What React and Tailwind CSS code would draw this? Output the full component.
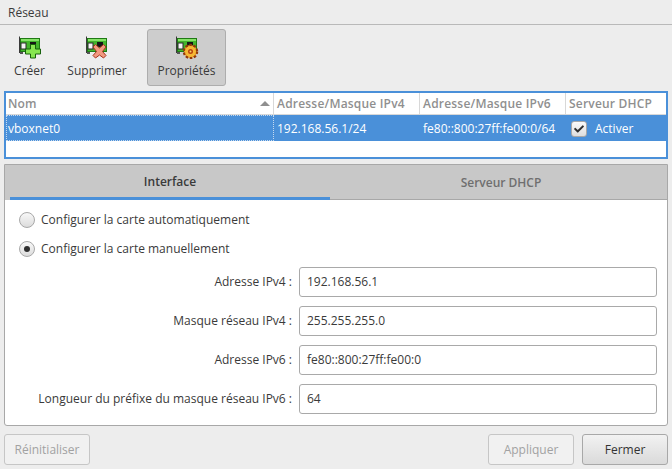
import { FaCheck } from "react-icons/fa";

const font = { fontFamily: '"Open Sans", sans-serif' };

// little green network card, the overlay differs per action
const CardIcon = ({ children }) => (
  <svg width="24" height="23" viewBox="0 0 24 23" className="block">
    <path d="M1.500 0.500V17" stroke="#3a3a3a" strokeWidth="1" fill="none" />
    <rect x="2" y="2" width="20" height="14" fill="#1f7a14" />
    <rect x="3" y="3" width="18" height="12" fill="#43b52c" />
    <rect x="3" y="3" width="18" height="2" fill="#86e268" />
    <rect x="3" y="7" width="5" height="6" fill="#f4f4f4" stroke="#2a2a2a" strokeWidth="1" />
    <rect x="12" y="6" width="6" height="5" fill="#161616" />
    <rect x="2" y="16" width="3" height="2" fill="#555" />
    {children}
  </svg>
);

const PlusOverlay = () => (
  <path
    d="M12.500 8.500h5v4.500h5v5h-5v4h-5v-4h-5v-5h5z"
    fill="#86e650"
    stroke="#17610c"
    strokeWidth="1"
  />
);

const CrossOverlay = () => (
  <path
    d="M8 11l2.500-2.500 4 3.500 4-3.500 2.500 2.500-3.500 4.500 3.500 4-2.500 2.500-4-3-4 3-2.500-2.500 3.500-4z"
    fill="#f19a80"
    stroke="#a8341d"
    strokeWidth="1"
  />
);

const GearOverlay = () => (
  <g>
    <circle cx="15.500" cy="15.500" r="6.500" fill="#f0a020" stroke="#93390a" strokeWidth="2.500" strokeDasharray="2.500 1.600" />
    <circle cx="15.500" cy="15.500" r="5.500" fill="#f6b735" />
    <circle cx="15.500" cy="15.500" r="2.500" fill="#b8420c" />
    <circle cx="15.500" cy="15.500" r="1" fill="#f7d56a" />
  </g>
);

const ToolButton = ({ icon, label, active, className }) => (
  <div
    className={`flex flex-col items-center h-[57px] pt-[6px] rounded-[3px] ${
      active ? "bg-[#cdcdcd] border border-[#adadad]" : "border border-transparent"
    } ${className}`}
  >
    <CardIcon>{icon}</CardIcon>
    <span className="mt-[4px] text-[12px] leading-[16px] text-[#3a3a3a]">{label}</span>
  </div>
);

const Radio = ({ checked, label }) => (
  <div className="flex items-center gap-[6px] h-[16px]">
    <span className="w-[16px] h-[16px] rounded-full border border-[#a8a8a8] bg-gradient-to-b from-[#f8f8f8] to-[#dcdcdc] flex items-center justify-center">
      {checked && <span className="w-[6px] h-[6px] rounded-full bg-[#2e2e2e]" />}
    </span>
    <span className="text-[12px] text-[#3a3a3a]">{label}</span>
  </div>
);

const Field = ({ label, value }) => (
  <div className="flex items-center gap-[7px]">
    <span className="w-[287px] text-right text-[12px] text-[#3a3a3a] whitespace-nowrap">{label}</span>
    <div className="w-[358px] h-[30px] border border-[#a9a9a9] rounded-[3px] bg-white flex items-center px-[7px] text-[12px] text-[#3a3a3a]">
      {value}
    </div>
  </div>
);

const HeaderCell = ({ className, children }) => (
  <div className={`h-[21px] flex items-center border-r border-[#d8d8d8] text-[12px] font-semibold tracking-[0.2px] text-[#8f8f8f] whitespace-nowrap overflow-hidden ${className}`}>
    {children}
  </div>
);

const RowCell = ({ className, children }) => (
  <div className={`h-[26px] pt-[1px] flex items-center text-[12px] text-white whitespace-nowrap ${className}`}>
    {children}
  </div>
);

const BottomButton = ({ label, disabled, className }) => (
  <div
    className={`h-[31px] w-[86px] pt-[1px] flex items-center justify-center rounded-[3px] border text-[12px] ${
      disabled
        ? "border-[#c6c6c6] bg-[#f1f1f1] text-[#a2a2a2]"
        : "border-[#a8a8a8] bg-gradient-to-b from-[#f2f2f2] to-[#dadada] text-[#333]"
    } ${className}`}
  >
    {label}
  </div>
);

const App = () => {
  return (
    <div className="w-[672px] h-[469px] bg-[#ededed] flex flex-col overflow-hidden" style={font}>
      <div className="h-[25px] border-b border-[#b9b9b9] px-[8px] pt-[1px] flex items-center text-[12px] text-[#3a3a3a]">
        Réseau
      </div>

      <div className="h-[66px] flex pt-[4px] pl-[6px]">
        <ToolButton icon={<PlusOverlay />} label="Créer" className="w-[47px]" />
        <ToolButton icon={<CrossOverlay />} label="Supprimer" className="w-[78px] ml-[5px]" />
        <ToolButton icon={<GearOverlay />} label="Propriétés" active className="w-[79px] ml-[11px]" />
      </div>

      <div className="mx-[4px] h-[68px] border-2 border-[#4a90d9] bg-white">
        <div className="flex border-b border-[#d8d8d8]">
          <HeaderCell className="w-[268px] pl-[2px] relative">
            Nom
            <span className="absolute right-[3px] top-[8px] w-0 h-0 border-l-[5px] border-r-[5px] border-b-[5px] border-l-transparent border-r-transparent border-b-[#8f8f8f]" />
          </HeaderCell>
          <HeaderCell className="w-[146px] pl-[3px]">Adresse/Masque IPv4</HeaderCell>
          <HeaderCell className="w-[146px] pl-[3px]">Adresse/Masque IPv6</HeaderCell>
          <HeaderCell className="flex-1 pl-[3px] border-r-0">Serveur DHCP</HeaderCell>
        </div>
        <div className="flex bg-[#4a90d9]">
          <RowCell className="w-[268px] pl-[1px] border border-dotted border-[#c5d9ef]">vboxnet0</RowCell>
          <RowCell className="w-[146px] pl-[3px]">192.168.56.1/24</RowCell>
          <RowCell className="w-[146px] pl-[3px]">fe80::800:27ff:fe00:0/64</RowCell>
          <RowCell className="flex-1 pl-[5px] gap-[8px]">
            <span className="w-[16px] h-[16px] rounded-[3px] border border-[#a8a8a8] bg-gradient-to-b from-[#fafafa] to-[#dedede] flex items-center justify-center">
              <FaCheck className="text-[10px] text-[#2e2e2e]" />
            </span>
            Activer
          </RowCell>
        </div>
      </div>

      <div className="mx-[4px] mt-[5px] h-[262px] border border-[#a8a8a8] rounded-b-[3px] bg-white flex flex-col">
        <div className="h-[35px] bg-[#c8c8c8] flex pl-[5px] text-[12px] font-semibold">
          <div className="w-[320px] pt-[2px] border-b-[3px] border-[#4a90d9] flex items-center justify-center text-[#3a3a3a]">
            Interface
          </div>
          <div className="flex-1 pl-[5px] pt-[2px] flex items-center justify-center text-[#6f6f6f] border-b border-[#a8a8a8]">
            Serveur DHCP
          </div>
        </div>
        <div className="flex flex-col pl-[14px] pt-[12px] gap-[13px]">
          <Radio label="Configurer la carte automatiquement" />
          <Radio checked label="Configurer la carte manuellement" />
        </div>
        <div className="flex flex-col gap-[9px] mt-[10px]">
          <Field label="Adresse IPv4 :" value="192.168.56.1" />
          <Field label="Masque réseau IPv4 :" value="255.255.255.0" />
          <Field label="Adresse IPv6 :" value="fe80::800:27ff:fe00:0" />
          <Field label="Longueur du préfixe du masque réseau IPv6 :" value="64" />
        </div>
      </div>

      <div className="flex mx-[4px] mt-[8px]">
        <BottomButton label="Réinitialiser" disabled />
        <BottomButton label="Appliquer" disabled className="ml-auto" />
        <BottomButton label="Fermer" className="ml-[8px]" />
      </div>
    </div>
  );
};

export default App;
